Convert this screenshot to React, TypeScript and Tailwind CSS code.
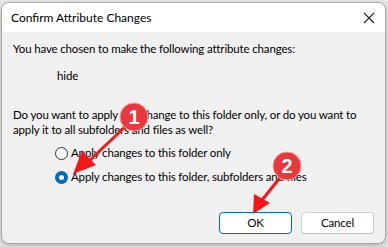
export default function App() {
  return (
    <div className="relative w-[388px] h-[247px] overflow-hidden bg-[#e9e9e9] font-['Lato',sans-serif] text-[12px] text-black">
      <div className="ml-[1px] mt-[2px] w-[385px] h-[242px] flex flex-col rounded-[8px] border border-[#a8a8a8] bg-[#f0f0f0] overflow-hidden shadow-[0_2px_6px_rgba(0,0,0,0.25)]">
        <div className="h-[29px] bg-white flex items-center justify-between pl-[9px] pr-[10px]">
          <span className="leading-none">Confirm Attribute Changes</span>
          <svg width="12" height="12" viewBox="0 0 12 12" className="mt-[1px]">
            <path d="M1 1 L11 11 M11 1 L1 11" stroke="#222" strokeWidth="1.1" fill="none" />
          </svg>
        </div>
        <div className="flex-1 flex flex-col px-[11px] whitespace-nowrap text-[11.5px] tracking-[-0.15px]">
          <p className="mt-[9px] leading-[16px]">You have chosen to make the following attribute changes:</p>
          <p className="mt-[11px] ml-[44px] leading-[16px]">hide</p>
          <p className="mt-[23px] leading-[15px]">
            Do you want to apply this change to this folder only, or do you want to
            <br />
            apply it to all subfolders and files as well?
          </p>
          <div className="mt-[8px] ml-[42px] flex flex-col gap-[8px]">
            <label className="flex items-center gap-[3px] h-[16px]">
              <span className="w-[13px] h-[13px] rounded-full border border-[#333] bg-[#f7f7f7]" />
              <span>Apply changes to this folder only</span>
            </label>
            <label className="flex items-center gap-[3px] h-[16px]">
              <span className="w-[13px] h-[13px] rounded-full bg-[#0067c0] flex items-center justify-center">
                <span className="w-[5px] h-[5px] rounded-full bg-white" />
              </span>
              <span>Apply changes to this folder, subfolders and files</span>
            </label>
          </div>
          <div className="mt-[27px] flex justify-end gap-[9px]">
            <button className="w-[73px] h-[22px] rounded-[4px] border border-[#0067c0] bg-white leading-none">OK</button>
            <button className="w-[73px] h-[22px] rounded-[4px] border border-[#d0d0d0] border-b-[#b8b8b8] bg-white leading-none">Cancel</button>
          </div>
        </div>
      </div>
      <svg className="absolute inset-0 pointer-events-none" width="388" height="247" viewBox="0 0 388 247">
        <line x1="128" y1="124" x2="88" y2="162" stroke="#f21818" strokeWidth="3" />
        <polygon points="73,174 82,151 96,165" fill="#f21818" />
        <line x1="283" y1="174" x2="262" y2="200" stroke="#f21818" strokeWidth="3" />
        <polygon points="253,214 254,194 270,203" fill="#f21818" />
        <circle cx="134" cy="117" r="14" fill="#e8383d" stroke="#f4a0a0" strokeWidth="1" />
        <text x="134" y="124" textAnchor="middle" fill="white" fontSize="20" fontWeight="700" fontFamily="Liberation Sans, sans-serif">1</text>
        <circle cx="287" cy="166" r="14" fill="#e8383d" stroke="#f4a0a0" strokeWidth="1" />
        <text x="287" y="173" textAnchor="middle" fill="white" fontSize="20" fontWeight="700" fontFamily="Liberation Sans, sans-serif">2</text>
      </svg>
    </div>
  );
}
